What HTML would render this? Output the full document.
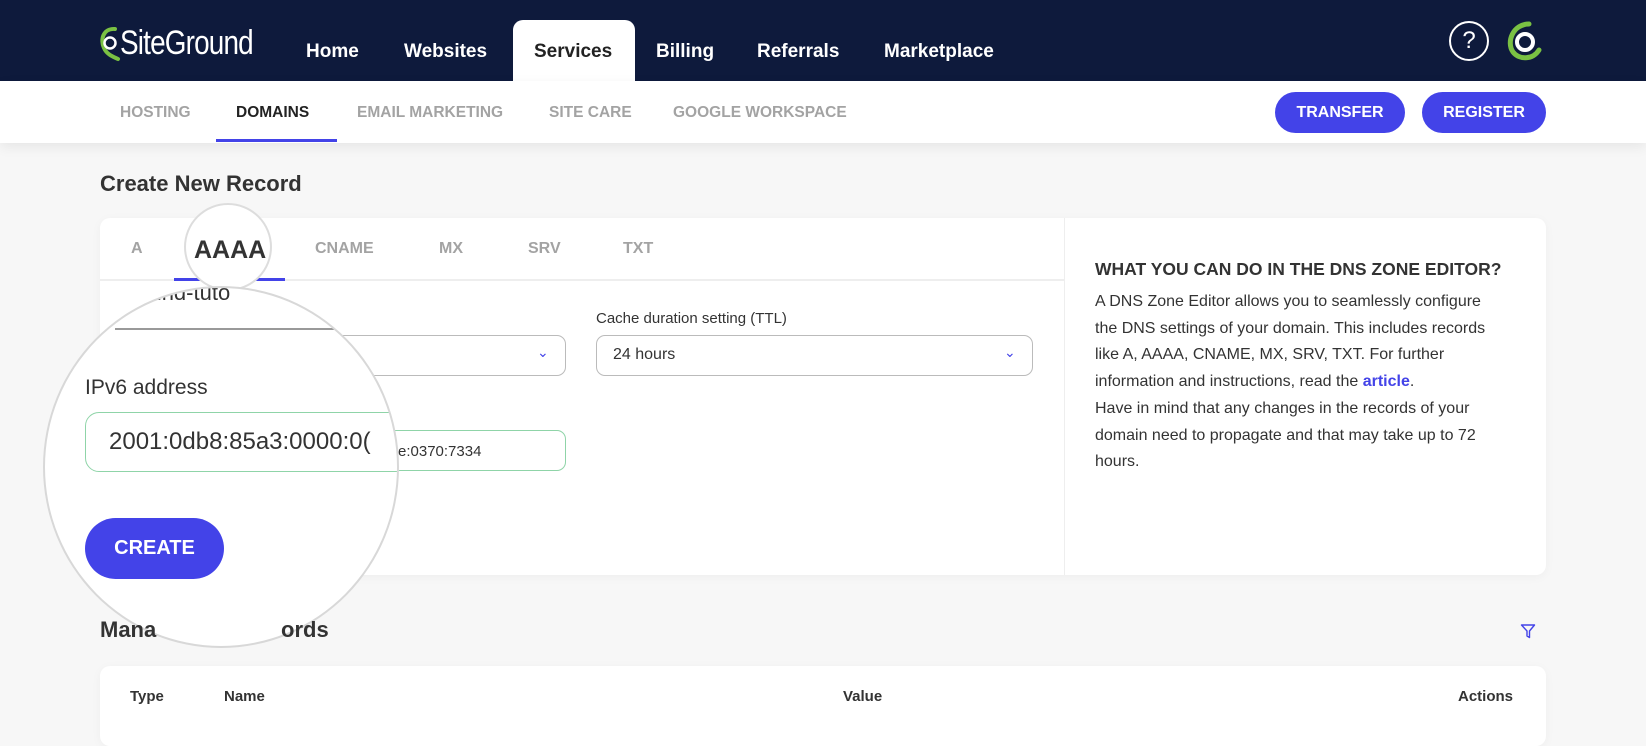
<!DOCTYPE html>
<html><head><meta charset="utf-8">
<style>
*{margin:0;padding:0;box-sizing:border-box}
body{width:1646px;height:729px;overflow:hidden;background:#f7f7f7;font-family:"Liberation Sans",sans-serif;color:#333;position:relative}
.abs{position:absolute}
.nav{left:0;top:0;width:1646px;height:81px;background:#0e1a3c}
.nv{top:40px;font-size:19px;font-weight:bold;color:#fff;line-height:24px}
.svc{left:513px;top:20px;width:122px;height:61px;background:#fff;border-radius:10px 10px 0 0}
.sub{left:0;top:81px;width:1646px;height:62px;background:#fff;box-shadow:0 4px 12px rgba(0,0,0,.07)}
.si{top:104px;font-size:15.5px;font-weight:bold;color:#a3a3a3;line-height:18px}
.btn{background:#4343e8;color:#fff;font-weight:bold;border-radius:22px;text-align:center;font-size:16px}
.card{background:#fff;border-radius:10px;box-shadow:0 2px 10px rgba(0,0,0,.04)}
.tab{top:240px;font-size:16px;font-weight:bold;color:#a3a3a3;line-height:18px}
.p{font-size:16px;line-height:26.7px;color:#333}
.fld{border:1px solid #bbb;border-radius:9px;background:#fff}
</style></head><body>
<div class="abs nav"></div>
<svg class="abs" style="left:99px;top:26px" width="22" height="36" viewBox="0 0 22 36">
<path d="M16 3 C4 2 1 14 5 22 C8 29 15 31 19 33" fill="none" stroke="#7ac143" stroke-width="4" stroke-linecap="round"/>
<circle cx="11" cy="17" r="5.5" fill="none" stroke="#fff" stroke-width="2.5"/></svg>
<div class="abs" style="left:120px;top:24px;font-size:34px;color:#fff;line-height:38px;transform:scaleX(0.82);transform-origin:left;letter-spacing:-1px">SiteGround</div>
<div class="abs svc"></div>
<div class="abs nv" style="left:306px">Home</div>
<div class="abs nv" style="left:404px">Websites</div>
<div class="abs nv" style="left:534px;color:#222">Services</div>
<div class="abs nv" style="left:656px">Billing</div>
<div class="abs nv" style="left:757px">Referrals</div>
<div class="abs nv" style="left:884px">Marketplace</div>
<div class="abs" style="left:1449px;top:21px;width:40px;height:40px;border:2px solid #fff;border-radius:50%;color:#fff;font-size:24px;text-align:center;line-height:36px">?</div>
<svg class="abs" style="left:1503px;top:20px" width="42" height="42" viewBox="0 0 42 42">
<path d="M26 4 C10 4 3 22 10 32 C16 40 30 40 36 30" fill="none" stroke="#7ac143" stroke-width="5" stroke-linecap="round"/>
<circle cx="22" cy="22" r="8" fill="none" stroke="#fff" stroke-width="4"/></svg>
<div class="abs sub"></div>
<div class="abs si" style="left:120px">HOSTING</div>
<div class="abs si" style="left:236px;color:#222">DOMAINS</div>
<div class="abs" style="left:216px;top:139px;width:121px;height:3px;background:#4343e8"></div>
<div class="abs si" style="left:357px">EMAIL MARKETING</div>
<div class="abs si" style="left:549px">SITE CARE</div>
<div class="abs si" style="left:673px">GOOGLE WORKSPACE</div>
<div class="abs btn" style="left:1275px;top:92px;width:130px;height:41px;line-height:41px">TRANSFER</div>
<div class="abs btn" style="left:1422px;top:92px;width:124px;height:41px;line-height:41px">REGISTER</div>

<div class="abs" style="left:100px;top:171px;font-size:22px;font-weight:bold;color:#333">Create New Record</div>
<div class="abs card" style="left:100px;top:218px;width:1446px;height:357px"></div>
<div class="abs" style="left:1064px;top:218px;width:1px;height:357px;background:#eee"></div>
<div class="abs" style="left:100px;top:279px;width:964px;height:2px;background:#eee"></div>
<div class="abs tab" style="left:131px">A</div>
<div class="abs tab" style="left:315px">CNAME</div>
<div class="abs tab" style="left:439px">MX</div>
<div class="abs tab" style="left:528px">SRV</div>
<div class="abs tab" style="left:623px">TXT</div>
<div class="abs" style="left:174px;top:278px;width:111px;height:3px;background:#4343e8"></div>
<div class="abs" style="left:184px;top:203px;width:88px;height:88px;border-radius:50%;background:#fff;border:2px solid #ddd"></div>
<div class="abs" style="left:194px;top:236px;font-size:25px;font-weight:bold;color:#333">AAAA</div>

<div class="abs" style="left:596px;top:310px;font-size:15px;color:#333">Cache duration setting (TTL)</div>
<div class="abs fld" style="left:596px;top:335px;width:437px;height:41px"></div>
<div class="abs" style="left:613px;top:346px;font-size:16px">24 hours</div>
<div class="abs" style="left:1004px;top:344px;color:#4343e8;font-size:14px">&#8964;</div>
<div class="abs fld" style="left:300px;top:335px;width:266px;height:41px"></div>
<div class="abs" style="left:537px;top:344px;color:#4343e8;font-size:14px">&#8964;</div>
<div class="abs fld" style="left:300px;top:430px;width:266px;height:41px;border-color:#8fd4a8"></div>
<div class="abs" style="left:398px;top:443px;font-size:15px">e:0370:7334</div>

<div class="abs" style="left:43px;top:286px;width:356px;height:362px;border-radius:50%;background:#fff;border:2px solid #d8d8d8;overflow:hidden">
 <div class="abs" style="left:80px;top:-8px;font-size:22px;color:#333">&nbsp;&nbsp;ound-tuto</div>
 <div class="abs" style="left:70px;top:40px;width:250px;height:2px;background:#999"></div>
 <div class="abs" style="left:40px;top:88px;font-size:21px;color:#333">IPv6 address</div>
 <div class="abs" style="left:40px;top:124px;width:340px;height:60px;border:1.5px solid #8fd4a8;border-radius:14px"></div>
 <div class="abs" style="left:64px;top:140px;font-size:24px;color:#333;white-space:nowrap">2001:0db8:85a3:0000:0(</div>
 <div class="abs btn" style="left:40px;top:230px;width:139px;height:61px;line-height:61px;border-radius:31px;font-size:20px">CREATE</div>
</div>

<div class="abs" style="left:1095px;top:259px;font-size:17.5px;font-weight:bold;color:#333">WHAT YOU CAN DO IN THE DNS ZONE EDITOR?</div>
<div class="abs p" style="left:1095px;top:289px;width:430px">A DNS Zone Editor allows you to seamlessly configure<br>the DNS settings of your domain. This includes records<br>like A, AAAA, CNAME, MX, SRV, TXT. For further<br>information and instructions, read the <b style="color:#4343e8">article</b>.<br>Have in mind that any changes in the records of your<br>domain need to propagate and that may take up to 72<br>hours.</div>

<div class="abs" style="left:100px;top:617px;font-size:22px;font-weight:bold;color:#333">Mana</div>
<div class="abs" style="left:281px;top:617px;font-size:22px;font-weight:bold;color:#333">ords</div>
<svg class="abs" style="left:1520px;top:623px" width="16" height="16" viewBox="0 0 16 16"><path d="M1.5 2 H14.5 L9.5 8 V14.5 L7 13 V8 Z" fill="none" stroke="#4343e8" stroke-width="1.4" stroke-linejoin="round"/></svg>
<div class="abs card" style="left:100px;top:666px;width:1446px;height:80px"></div>
<div class="abs" style="left:130px;top:688px;font-size:15px;font-weight:bold">Type</div>
<div class="abs" style="left:224px;top:688px;font-size:15px;font-weight:bold">Name</div>
<div class="abs" style="left:843px;top:688px;font-size:15px;font-weight:bold">Value</div>
<div class="abs" style="left:1458px;top:688px;font-size:15px;font-weight:bold">Actions</div>
</body></html>
